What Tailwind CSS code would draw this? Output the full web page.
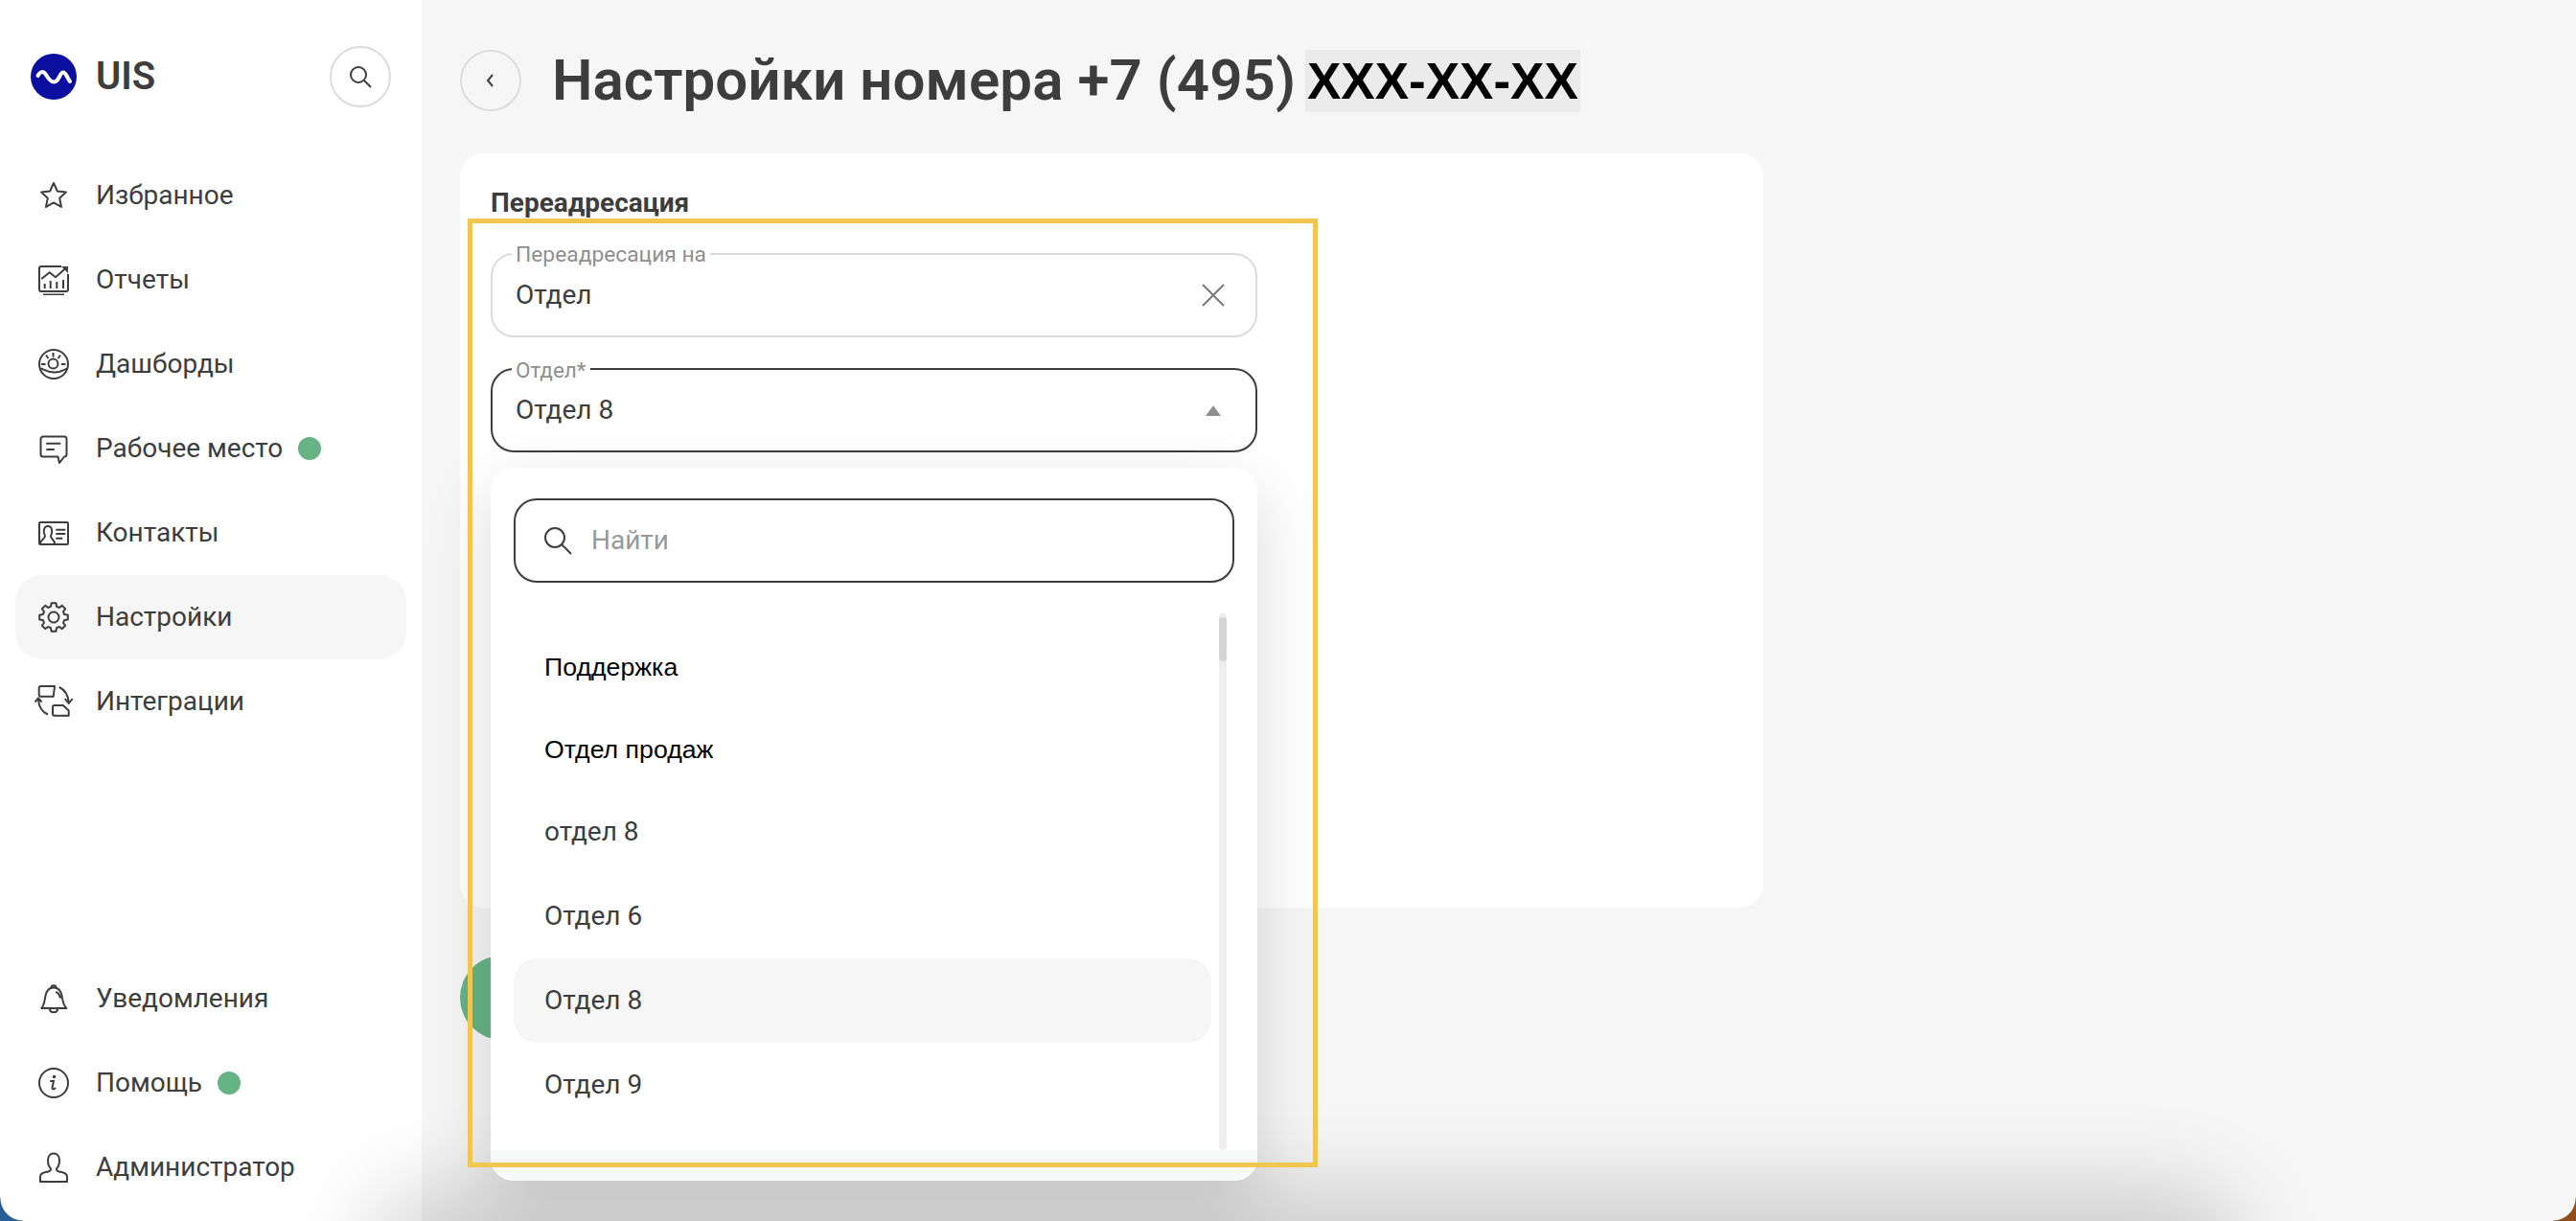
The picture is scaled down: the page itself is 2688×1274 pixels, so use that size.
<!DOCTYPE html>
<html lang="ru"><head><meta charset="utf-8"><script src="https://cdn.jsdelivr.net/npm/@tailwindcss/browser@4"></script></head>
<body class="m-0 overflow-hidden bg-[#f6f6f6]">
<div class="relative h-[1274px] w-[2688px] overflow-hidden bg-[#f6f6f6] font-['Roboto',sans-serif] text-[#3d3d3d]">
  <div class="flex h-full">
    <aside class="flex h-full w-[440px] shrink-0 flex-col bg-white px-4 pb-[12px] pt-[48px]">
      <div class="flex h-[64px] items-center pl-4 pr-4">
        <svg class="h-12 w-12 shrink-0" viewBox="0 0 48 48"><circle cx="24" cy="24" r="24" fill="#0a0f9e"/><path d="M7.500 23C10 18 13.500 18 16 22C19 27 22 31 26 29C30 27 31 19 34 19.500C37 20 38 25 41 29" fill="none" stroke="#fff" stroke-width="4" stroke-linecap="round"/></svg>
        <span class="ml-[20px] text-[40px] font-semibold leading-none">UIS</span>
        <button class="ml-auto flex h-16 w-16 items-center justify-center rounded-full border-2 border-[#dcdcdc]"><svg class="h-7 w-7" viewBox="0 0 28 28" fill="none" stroke="#3d3d3d" stroke-width="2"><circle cx="12" cy="12" r="8"/><path d="M18 18l7 7"/></svg></button>
      </div>
      <nav class="mt-[48px] flex flex-col text-[28px] leading-none">
        <a class="flex h-[88px] items-center rounded-[28px] pl-[20px]"><span class="flex w-[40px] justify-center"><svg class="h-8 w-8" viewBox="0 0 32 32" fill="none" stroke="#3d3d3d" stroke-width="2" stroke-linejoin="round"><path d="M16 3l3.900 8.500 9 1.100-6.700 6.200 1.800 9.100L16 23.400 8 27.900l1.800-9.100-6.700-6.200 9-1.100z"/></svg></span><span class="ml-[24px]">Избранное</span></a>
        <a class="flex h-[88px] items-center rounded-[28px] pl-[20px]"><span class="flex w-[40px] justify-center"><svg class="h-8 w-8" viewBox="0 0 32 32" fill="none" stroke="#3d3d3d" stroke-width="2"><path d="M24 2H3a2 2 0 0 0-2 2v22a2 2 0 0 0 2 2h26a2 2 0 0 0 2-2V10M5 31.500h22"/><path d="M3.300 15l8.400-6.700L18 13.300 29 3.500"/><path d="M24 2h7v7z" fill="#3d3d3d" stroke="none"/><path d="M6.700 25v-5M12.700 25v-8M19.300 25v-7M26 25v-9"/></svg></span><span class="ml-[24px]">Отчеты</span></a>
        <a class="flex h-[88px] items-center rounded-[28px] pl-[20px]"><span class="flex w-[40px] justify-center"><svg class="h-8 w-8" viewBox="0 0 32 32" fill="none" stroke="#3d3d3d" stroke-width="2"><circle cx="16" cy="16" r="15"/><circle cx="15.500" cy="15.500" r="5"/><path d="M15.500 4v4.500M8 6.500l2.500 3.500M23 6.500L20.500 10M3 16h4.500M24 16h4.500M1.500 20.500c4 0 6 3.500 14.500 4s11-4 15-4"/></svg></span><span class="ml-[24px]">Дашборды</span></a>
        <a class="flex h-[88px] items-center rounded-[28px] pl-[20px]"><span class="flex w-[40px] justify-center"><svg class="h-8 w-8" viewBox="0 0 32 32" fill="none" stroke="#3d3d3d" stroke-width="2" stroke-linejoin="round"><path d="M5 3.500H27A2.500 2.500 0 0 1 29.500 6V22A2.500 2.500 0 0 1 27 24.500L22 31l-1.500-6.500H5A2.500 2.500 0 0 1 2.500 22V6A2.500 2.500 0 0 1 5 3.500z"/><path d="M8.300 10.700h15M8.300 17h8.500"/></svg></span><span class="ml-[24px]">Рабочее место</span><span class="ml-[16px] h-6 w-6 rounded-full bg-[#66b386]"></span></a>
        <a class="flex h-[88px] items-center rounded-[28px] pl-[20px]"><span class="flex w-[40px] justify-center"><svg class="h-8 w-8" viewBox="0 0 32 32" fill="none" stroke="#3d3d3d" stroke-width="2"><rect x="1" y="5" width="30" height="23" rx="1"/><path d="M2 27c0-4 5-4 5-8-2-3-2-10 3-10s5 7 3 10c0 4 4 4 4 8M18.300 12.700h10M18.300 17h10M18.300 21.700h7"/></svg></span><span class="ml-[24px]">Контакты</span></a>
        <a class="flex h-[88px] items-center rounded-[28px] bg-[#f6f6f6] pl-[20px]"><span class="flex w-[40px] justify-center"><svg class="h-8 w-8" viewBox="0 0 32 32" fill="none" stroke="#3d3d3d" stroke-width="2" stroke-linejoin="round"><circle cx="16" cy="16" r="5.500"/><path d="M13 4.900L13.700 1.200H18.400L19 4.900L21.800 6L24.800 3.900L28.100 7.200L26 10.300L27.100 13L30.800 13.700V18.400L27.100 19L26 21.800L28.100 24.800L24.800 28.100L21.800 26L19 27.100L18.400 30.800H13.700L13 27.100L10.300 26L7.200 28.100L3.900 24.800L6 21.800L4.900 19L1.200 18.400V13.700L4.900 13L6 10.300L3.900 7.200L7.200 3.900L10.300 6z"/></svg></span><span class="ml-[24px]">Настройки</span></a>
        <a class="flex h-[88px] items-center rounded-[28px] pl-[20px]"><span class="flex w-[40px] justify-center"><svg class="h-9 w-9 overflow-visible" viewBox="0 0 36 36" fill="none" stroke="#3d3d3d" stroke-width="2" stroke-linejoin="round"><path d="M4.500 2H19l-1.200 10.700H4.500A2 2 0 0 1 2.700 10.700V4A2 2 0 0 1 4.500 2zM19 22h9l5.700 5.500v5.200H19a2 2 0 0 1-2-2V24a2 2 0 0 1 2-2z"/><path d="M23.700 3c5.500 2.500 9.500 8 10 16M29.700 15l4 5 4-5M12 31.500C6 29 2.500 23 2 16M-1.500 18.500l3.500-4.200 3.500 4.200"/></svg></span><span class="ml-[24px]">Интеграции</span></a>
      </nav>
      <div class="mt-auto flex flex-col text-[28px] leading-none">
        <a class="flex h-[88px] items-center pl-[20px]"><span class="flex w-[40px] justify-center"><svg class="h-8 w-8" viewBox="0 0 32 32" fill="none" stroke="#3d3d3d" stroke-width="2" stroke-linejoin="round"><path d="M3.300 26c3-3.500 3.200-8 4.200-13C8.500 7.500 12 4.500 16 4.500s7.500 3 8.500 8.500c1 5 1.200 9.500 4.800 13zM13.500 4.500c0-3 5-3 5 0M12 26.500c0 5 8 5 8 0M18.300 9c2.500 1 4 3.500 4.700 6.500"/></svg></span><span class="ml-[24px]">Уведомления</span></a>
        <a class="flex h-[88px] items-center pl-[20px]"><span class="flex w-[40px] justify-center"><svg class="h-8 w-8" viewBox="0 0 32 32" fill="none" stroke="#3d3d3d" stroke-width="2"><circle cx="16" cy="16" r="15"/><path d="M13 14h3l-1.500 7c-.3 1.500 1 2 3 .5" stroke-linecap="round"/><circle cx="16.500" cy="9.500" r=".8" fill="#3d3d3d"/></svg></span><span class="ml-[24px]">Помощь</span><span class="ml-[16px] h-6 w-6 rounded-full bg-[#66b386]"></span></a>
        <a class="flex h-[88px] items-center pl-[20px]"><span class="flex w-[40px] justify-center"><svg class="h-8 w-8" viewBox="0 0 32 32" fill="none" stroke="#3d3d3d" stroke-width="2" stroke-linejoin="round"><path d="M2 31v-5c0-3 3-4.500 6-5 3-.5 5.500-1.500 5-3.500-1-1-3-3-3-9 0-4 2.500-7 6-7s6 3 6 7c0 6-2 8-3 9-.5 2 2 3 5 3.500 3 .5 6 2 6 5v5z"/></svg></span><span class="ml-[24px]">Администратор</span></a>
      </div>
    </aside>
    <main class="min-w-0 flex-1 px-10 pt-[52px]">
      <header class="flex h-16 items-center">
        <button class="flex h-16 w-16 items-center justify-center rounded-full border-2 border-[#dcdcdc]"><svg class="h-5 w-5" viewBox="0 0 20 20" fill="none" stroke="#3d3d3d" stroke-width="2"><path d="M12 4l-5 6 5 6"/></svg></button>
        <h1 class="ml-[32px] whitespace-nowrap text-[60px] font-semibold leading-none tracking-[0.08px]">Настройки номера +7 (495)</h1>
        <span class="ml-[10px] flex h-[65px] items-center bg-[#ebebeb] px-[2px] font-['Liberation_Sans',sans-serif] text-[53px] font-bold leading-none text-black">XXX-XX-XX</span>
      </header>
      <section class="relative mt-[44px] h-[787px] w-[1360px] rounded-[24px] bg-white px-8 pt-[38px]">
        <h2 class="text-[28px] font-bold leading-[28px]">Переадресация</h2>
      </section>
      <div class="mt-[50px] h-[88px] w-[300px] rounded-full bg-[#66b386]"></div>
    </main>
  </div>

  <!-- shadow along the foot of the window -->
  <div class="absolute bottom-[-70px] left-[420px] h-[70px] w-[1880px] rounded-[24px] shadow-[0_0_90px_34px_rgba(0,0,0,0.17)]"></div>

  <!-- open form fields overlay -->
  <div class="absolute left-[512px] top-[264px] flex w-[800px] flex-col">
    <div class="relative flex h-[88px] items-center justify-between rounded-[24px] border-2 border-[#dcdcdc] bg-white px-[24px] text-[28px]">
      <span class="absolute left-[20px] top-[-12px] bg-white px-[4px] text-[22.8px] leading-[24px] text-[#8f8f8f]">Переадресация на</span>
      <span>Отдел</span>
      <svg class="mr-[8px] h-6 w-6" viewBox="0 0 24 24" fill="none" stroke="#7a7a7a" stroke-width="2"><path d="M1 1l22 22M23 1L1 23"/></svg>
    </div>
    <div class="relative mt-[32px] flex h-[88px] items-center justify-between rounded-[24px] border-2 border-[#3d3d3d] bg-white px-[24px] text-[28px]">
      <span class="absolute left-[20px] top-[-12px] bg-white px-[4px] text-[22.5px] leading-[24px] text-[#8f8f8f]">Отдел*</span>
      <span>Отдел 8</span>
      <span class="mr-[12px] h-0 w-0 border-x-[8px] border-b-[11px] border-x-transparent border-b-[#8f8f8f]"></span>
    </div>
    <div class="relative mt-[16px] h-[744px] rounded-[24px] bg-white shadow-[0_24px_70px_rgba(0,0,0,0.15)]">
      <div class="absolute inset-x-0 bottom-0 h-[32px] rounded-b-[24px] bg-[#f8f9f9]"></div>
      <div class="relative flex h-full flex-col px-[24px] pt-[32px]">
        <div class="flex h-[88px] items-center rounded-[24px] border-2 border-[#3d3d3d] pl-[28px] text-[28px] text-[#999]">
          <svg class="h-8 w-8 shrink-0" viewBox="0 0 32 32" fill="none" stroke="#3d3d3d" stroke-width="2"><circle cx="13" cy="13" r="10"/><path d="M20 20l10 10"/></svg>
          <span class="ml-[19px]">Найти</span>
        </div>
        <div class="relative mt-[32px] flex h-[560px] flex-col pr-[24px] text-[28px] leading-none">
          <div class="absolute right-[8px] top-0 h-[560px] w-2 rounded-full bg-[#eeeeee]"><div class="mt-[4px] h-[46px] w-2 rounded-full bg-[#d4d4d4]"></div></div>
          <div class="mt-[12px] flex h-[88px] items-center pl-[32px] font-['Liberation_Sans',sans-serif] text-[26.7px] text-black">Поддержка</div>
          <div class="flex h-[84px] items-center pl-[32px] font-['Liberation_Sans',sans-serif] text-[26.7px] text-black">Отдел продаж</div>
          <div class="flex h-[88px] items-center pl-[32px]">отдел 8</div>
          <div class="flex h-[88px] items-center pl-[32px]">Отдел 6</div>
          <div class="flex h-[88px] items-center rounded-[24px] bg-[#f6f6f6] pl-[32px]">Отдел 8</div>
          <div class="flex h-[88px] items-center pl-[32px]">Отдел 9</div>
        </div>
      </div>
    </div>
  </div>

  <!-- annotation frame -->
  <div class="pointer-events-none absolute left-[488px] top-[228px] h-[990px] w-[887px] border-[5px] border-[#f0c550]"></div>

  <!-- window corners -->
  <div class="absolute bottom-0 left-0 h-6 w-6 bg-[radial-gradient(circle_at_100%_0,transparent_23px,#2a5f95_24px)]"></div>
  <div class="absolute bottom-0 right-0 h-6 w-6 bg-[radial-gradient(circle_at_0_0,transparent_23px,#8f4f1c_24px)]"></div>
</div>
</body></html>
